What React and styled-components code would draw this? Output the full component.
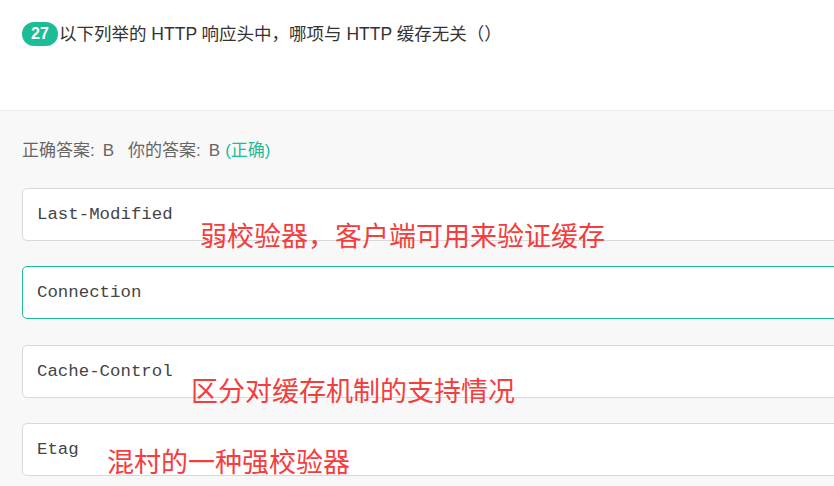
import React from "react";
import styled, { createGlobalStyle } from "styled-components";

const GlobalStyle = createGlobalStyle`
  html, body { margin: 0; padding: 0; background: #f8f8f8; overflow: hidden; }
  body { font-family: "Liberation Sans", "Noto Sans CJK SC", sans-serif; }
`;

const Page = styled.div`
  position: relative;
  width: 834px;
  height: 486px;
  overflow: hidden;
  background: #f8f8f8;
`;

const QuestionHeader = styled.div`
  height: 111px;
  background: #fff;
  border-bottom: 1px solid #ebebeb;
  box-sizing: border-box;
  padding: 22px 0 0 22px;
  display: flex;
  align-items: flex-start;
`;

const Badge = styled.span`
  display: inline-flex;
  align-items: center;
  justify-content: center;
  width: 36px;
  height: 24px;
  border-radius: 12px;
  background: #1dbc98;
  color: #fff;
  font-weight: bold;
  font-size: 16px;
  font-family: "Liberation Sans", sans-serif;
  margin-right: 1px;
`;

const QuestionText = styled.span`
  font-size: 17.5px;
  line-height: 24px;
  color: #333;
`;

const Body = styled.div`
  padding: 28px 0 0 22px;
`;

const AnswerLine = styled.div`
  display: flex;
  align-items: baseline;
  font-size: 17px;
  line-height: 24px;
  color: #666;
  margin-bottom: 25px;
`;

const AnswerPart = styled.span`
  margin-left: ${(p) => p.$gap || 0}px;
  white-space: pre;
`;

const Correct = styled.span`
  color: #1dbc98;
`;

const Options = styled.div`
  display: flex;
  flex-direction: column;
  gap: 25.33px;
`;

const Option = styled.div`
  width: 900px;
  height: 53px;
  box-sizing: border-box;
  background: #fff;
  border: 1px solid ${(p) => (p.$selected ? "#1dbc98" : "#d9d9d9")};
  border-radius: 5px;
  display: flex;
  align-items: center;
  padding-left: 14px;
  font-family: "Liberation Mono", monospace;
  font-size: 17.4px;
  color: #444;
`;

const Note = styled.div`
  position: absolute;
  font-family: "Noto Sans CJK SC", sans-serif;
  font-size: 27px;
  line-height: 1;
  color: #f43d3d;
  white-space: nowrap;
`;

const options = [
  { label: "Last-Modified" },
  { label: "Connection", selected: true },
  { label: "Cache-Control" },
  { label: "Etag" },
];

const notes = [
  { text: "弱校验器，客户端可用来验证缓存", left: 200, top: 221 },
  { text: "区分对缓存机制的支持情况", left: 191, top: 376 },
  { text: "混村的一种强校验器", left: 107, top: 447 },
];

export default function App() {
  return (
    <>
      <GlobalStyle />
      <Page>
        <QuestionHeader>
          <Badge>27</Badge>
          <QuestionText>以下列举的 HTTP 响应头中，哪项与 HTTP 缓存无关（）</QuestionText>
        </QuestionHeader>
        <Body>
          <AnswerLine>
            <AnswerPart>正确答案:</AnswerPart>
            <AnswerPart $gap={8}>B</AnswerPart>
            <AnswerPart $gap={14}>你的答案:</AnswerPart>
            <AnswerPart $gap={8}>B</AnswerPart>
            <AnswerPart $gap={5}>
              <Correct>(正确)</Correct>
            </AnswerPart>
          </AnswerLine>
          <Options>
            {options.map((o) => (
              <Option key={o.label} $selected={o.selected}>
                {o.label}
              </Option>
            ))}
          </Options>
        </Body>
        {notes.map((n) => (
          <Note key={n.text} style={{ left: n.left, top: n.top }}>
            {n.text}
          </Note>
        ))}
      </Page>
    </>
  );
}
